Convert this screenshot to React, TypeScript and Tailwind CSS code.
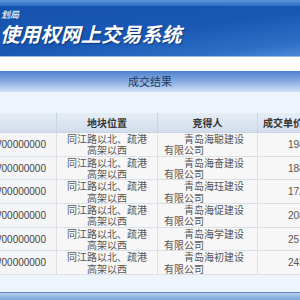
const rows = [
  { id: "TDW00000000", loc: "同江路以北、疏港高架以西", buyer: "青岛海聪建设有限公司", price: "1980" },
  { id: "TDW00000000", loc: "同江路以北、疏港高架以西", buyer: "青岛海奋建设有限公司", price: "1880" },
  { id: "TDW00000000", loc: "同江路以北、疏港高架以西", buyer: "青岛海珏建设有限公司", price: "1720" },
  { id: "TDW00000000", loc: "同江路以北、疏港高架以西", buyer: "青岛海促建设有限公司", price: "2080" },
  { id: "TDW00000000", loc: "同江路以北、疏港高架以西", buyer: "青岛海学建设有限公司", price: "2570" },
  { id: "TDW00000000", loc: "同江路以北、疏港高架以西", buyer: "青岛海初建设有限公司", price: "2430" },
];

export default function App() {
  return (
    <div className="w-[300px] h-[300px] overflow-hidden flex flex-col bg-[#eef4fb] font-['Noto_Sans_CJK_SC',sans-serif]">
      {/* banner */}
      <div className="h-[56px] shrink-0 flex flex-col bg-[linear-gradient(172deg,#1552ad_0%,#1858b4_55%,#2d6fc6_85%,#4a88d6_100%)]">
        <div className="h-[6px] bg-[linear-gradient(180deg,#5a95dc,#2d6bc2)]" />
        <div className="pl-[1px] pt-[3px] text-[9px] leading-[11px] font-bold italic text-[#d6e4f6]">划局</div>
        <div className="pt-[3px] text-[20px] leading-[22px] font-bold italic text-white tracking-[0.2px] [text-shadow:1px_1px_1px_rgba(0,30,80,0.6)]">
          使用权网上交易系统
        </div>
      </div>

      <div className="h-[15px] shrink-0 bg-white border-t border-[#9ab9e0]" />

      {/* title */}
      <div className="h-[21px] shrink-0 flex items-center justify-center bg-[linear-gradient(180deg,#4f80cf_0%,#8fb2e4_55%,#d3e2f6_100%)]">
        <span className="text-[11px] text-[#223a60]">成交结果</span>
      </div>

      <div className="h-[21px] shrink-0" />

      {/* table */}
      <div className="overflow-hidden">
        <div className="grid grid-cols-[57px_101px_100px_90px] w-[348px] text-[10px]">
          <div className="h-[20px] bg-[linear-gradient(180deg,#e6edf6,#d2dded)] border-r border-b border-[#c9d4e3]" />
          <div className="h-[20px] flex items-center justify-center font-bold text-[#333] bg-[linear-gradient(180deg,#e6edf6,#d2dded)] border-r border-b border-[#c9d4e3]">地块位置</div>
          <div className="h-[20px] flex items-center justify-center font-bold text-[#333] bg-[linear-gradient(180deg,#e6edf6,#d2dded)] border-r border-b border-[#c9d4e3]">竞得人</div>
          <div className="h-[20px] flex items-center pl-[5px] font-bold text-[#333] bg-[linear-gradient(180deg,#e6edf6,#d2dded)] border-b border-[#c9d4e3] whitespace-nowrap">成交单价(元/㎡)</div>

          {rows.map((r, i) => (
            <div key={i} className="contents">
              <div className="h-[23.7px] flex items-center justify-end pr-[10px] overflow-hidden whitespace-nowrap bg-[#f4f5f6] border-r border-b border-[#dcdfe3] text-[#444] font-['Liberation_Sans',sans-serif]">
                {r.id}
              </div>
              <div className="h-[23.7px] px-[6px] flex items-center justify-center text-center leading-[11.3px] text-[#555] bg-[#f7f7f7] border-r border-b border-[#dcdfe3]">
                {r.loc}
              </div>
              <div className="h-[23.7px] px-[6px] flex items-center leading-[11.3px] text-[#555] indent-[20px] bg-[#f7f7f7] border-r border-b border-[#dcdfe3]">
                <span>{r.buyer}</span>
              </div>
              <div className="h-[23.7px] pl-[30px] flex items-center text-[#555] bg-[#f7f7f7] border-b border-[#dcdfe3] font-['Liberation_Sans',sans-serif]">
                {r.price}
              </div>
            </div>
          ))}
        </div>
      </div>

      <div className="flex-1" />
      <div className="h-[8px] shrink-0 border-t border-[#5b87c2] bg-[linear-gradient(180deg,#b7cfee,#7aa5dd)]" />
    </div>
  );
}
